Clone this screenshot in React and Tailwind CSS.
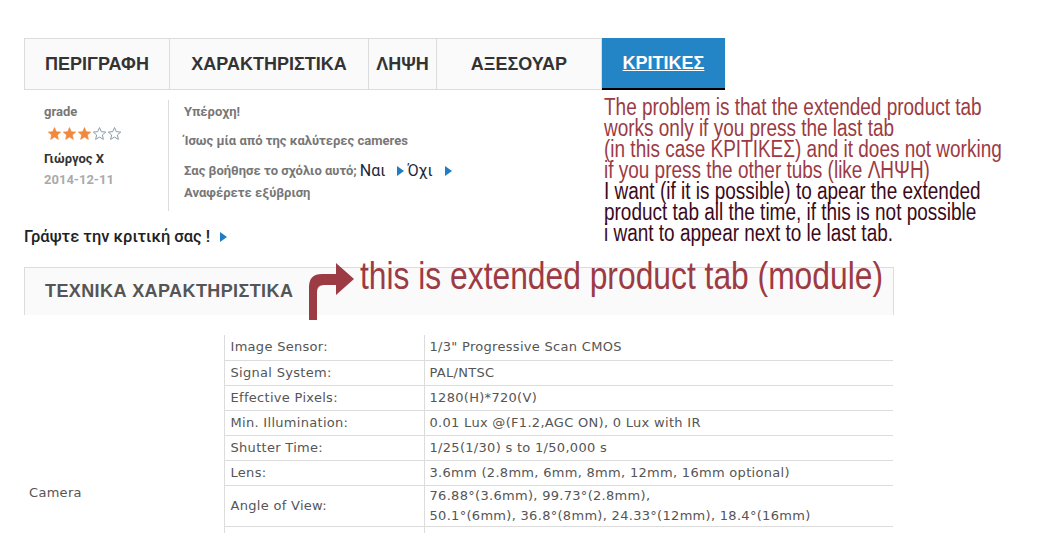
const tabs = [
  { label: "ΠΕΡΙΓΡΑΦΗ", w: "w-[146px]" },
  { label: "ΧΑΡΑΚΤΗΡΙΣΤΙΚΑ", w: "w-[199px]" },
  { label: "ΛΗΨΗ", w: "w-[68px]" },
  { label: "ΑΞΕΣΟΥΑΡ", w: "w-[165px]" },
];

const specs = [
  ["Image Sensor:", ["1/3\" Progressive Scan CMOS"]],
  ["Signal System:", ["PAL/NTSC"]],
  ["Effective Pixels:", ["1280(H)*720(V)"]],
  ["Min. Illumination:", ["0.01 Lux @(F1.2,AGC ON), 0 Lux with IR"]],
  ["Shutter Time:", ["1/25(1/30) s to 1/50,000 s"]],
  ["Lens:", ["3.6mm (2.8mm, 6mm, 8mm, 12mm, 16mm optional)"]],
  ["Angle of View:", ["76.88°(3.6mm), 99.73°(2.8mm),", "50.1°(6mm), 36.8°(8mm), 24.33°(12mm), 18.4°(16mm)"]],
  ["Lens Mount:", ["M12"]],
  ["Day & Night:", ["IR cut filter with auto switch"]],
  ["Wide Dynamic Range:", ["Digital WDR"]],
  ["Backlight Compensation:", ["Yes"]],
  ["S/N Ratio:", ["More than 62 dB"]],
];

function Star({ filled }) {
  return (
    <svg width="15" height="15" viewBox="0 0 24 24">
      <path
        d="M12 2.5l2.9 6.6 7.1.6-5.4 4.7 1.6 7-6.2-3.7-6.2 3.7 1.6-7L2 9.7l7.1-.6z"
        fill={filled ? "#f0883e" : "none"}
        stroke={filled ? "#f0883e" : "#8a9bb0"}
        strokeWidth={filled ? 1 : 1.6}
      />
    </svg>
  );
}

function Tri() {
  return <span className="inline-block w-0 h-0 border-y-[5px] border-y-transparent border-l-[7px] border-l-[#1f7dc4]" />;
}

export default function App() {
  return (
    <div className="relative w-[1058px] h-[533px] overflow-hidden bg-white font-['Roboto',sans-serif]">
      <div className="pl-[24px] pt-[38px]">
        {/* tabs */}
        <div className="flex w-[701px] font-['Liberation_Sans',Arial,sans-serif] font-bold text-[18px] text-[#333]">
          {tabs.map((t, i) => (
            <div
              key={t.label}
              className={`${t.w} h-[52px] flex items-center justify-center bg-[#fafafa] border-t border-b border-r border-[#dcdcdc] ${i === 0 ? "border-l" : ""}`}
            >
              {t.label}
            </div>
          ))}
          <div className="w-[123px] h-[52px] flex items-center justify-center bg-[#2384c6] text-white underline border-b-2 border-b-black">
            ΚΡΙΤΙΚΕΣ
          </div>
        </div>

        {/* review */}
        <div className="flex mt-[10px] h-[111px]">
          <div className="w-[145px] pl-[20px] border-r border-[#dcdcdc] text-[13px] font-bold">
            <div className="text-[#777] leading-[20px] mt-[2px]">grade</div>
            <div className="flex pl-[3px] mt-[4px]">
              <Star filled />
              <Star filled />
              <Star filled />
              <Star />
              <Star />
            </div>
            <div className="text-[#333] leading-[20px] mt-[8px]">Γιώργος Χ</div>
            <div className="text-[#aaa] leading-[20px] mt-[1px]">2014-12-11</div>
          </div>
          <div className="pl-[15px] text-[13px] font-bold text-[#777]">
            <div className="leading-[20px] mt-[2px]">Υπέροχη!</div>
            <div className="leading-[20px] mt-[9px]">Ίσως μία από της καλύτερες cameres</div>
            <div className="flex items-center leading-[22px] mt-[9px]">
              <span>Σας βοήθησε το σχόλιο αυτό;</span>
              <span className="ml-[3px] text-[16px] font-normal text-[#1b2a3b]">Ναι</span>
              <span className="ml-[12px] mr-[3px] flex"><Tri /></span>
              <span className="text-[16px] font-normal text-[#1b2a3b]">Όχι</span>
              <span className="ml-[12px] flex"><Tri /></span>
            </div>
            <div className="leading-[20px] mt-[1px]">Αναφέρετε εξύβριση</div>
          </div>
        </div>

        <div className="flex items-center gap-[10px] mt-[15px] text-[16.5px] font-medium text-[#222] leading-[22px]">
          <span>Γράψτε την κριτική σας !</span>
          <Tri />
        </div>

        {/* extended product tab */}
        <div className="mt-[19px] w-[870px] h-[48px] bg-[#fafafa] border-t border-x border-[#dcdcdc] flex items-center pl-[20px] font-['Liberation_Sans',Arial,sans-serif] font-bold text-[18px] text-[#555] tracking-[0.4px]">
          ΤΕΧΝΙΚΑ ΧΑΡΑΚΤΗΡΙΣΤΙΚΑ
        </div>

        <table className="mt-[20px] border-collapse font-['DejaVu_Sans',sans-serif] text-[13px] tracking-[0.3px] text-[#555]">
          <tbody>
            {specs.map(([k, v], i) => (
              <tr key={k}>
                {i === 0 && (
                  <td rowSpan={specs.length} className="w-[200px] pl-[5px] align-middle">
                    Camera
                  </td>
                )}
                <td className="w-[200px] pl-[6px] h-[25px] border-l border-b border-[#dcdcdc] leading-[20px]">{k}</td>
                <td className="w-[469px] pl-[5px] h-[25px] border-l border-b border-[#dcdcdc] leading-[20px]">
                  {v.map((line) => (
                    <div key={line}>{line}</div>
                  ))}
                </td>
              </tr>
            ))}
          </tbody>
        </table>
      </div>

      {/* annotations */}
      <div className="absolute left-[604px] top-[97px] origin-top-left scale-x-[0.825] whitespace-nowrap font-['Liberation_Sans',Arial,sans-serif] text-[23px] leading-[21px]">
        <div className="text-[#9c3b44]">
          <div>The problem is that the extended product tab</div>
          <div>works only if you press the last tab</div>
          <div>(in this case ΚΡΙΤΙΚΕΣ) and it does not working</div>
          <div>if you press the other tubs (like ΛΗΨΗ)</div>
        </div>
        <div className="text-[#3b0a1c]">
          <div>I want (if it is possible) to apear the extended</div>
          <div>product tab all the time, if this is not possible</div>
          <div>i want to appear next to le last tab.</div>
        </div>
      </div>

      <svg className="absolute left-[300px] top-[255px]" width="60" height="70" viewBox="0 0 60 70">
        <path d="M9 65 V32 Q9 19 22 19 H36 V8 L54 24 L36 40 V30 H24 Q17 30 17 37 V65 Z" fill="#9c3b44" />
      </svg>
      <div className="absolute left-[360px] top-[254px] origin-top-left scale-x-[0.815] whitespace-nowrap font-['Liberation_Sans',Arial,sans-serif] text-[39px] leading-[44px] text-[#9c3b44]">
        this is extended product tab (module)
      </div>
    </div>
  );
}
